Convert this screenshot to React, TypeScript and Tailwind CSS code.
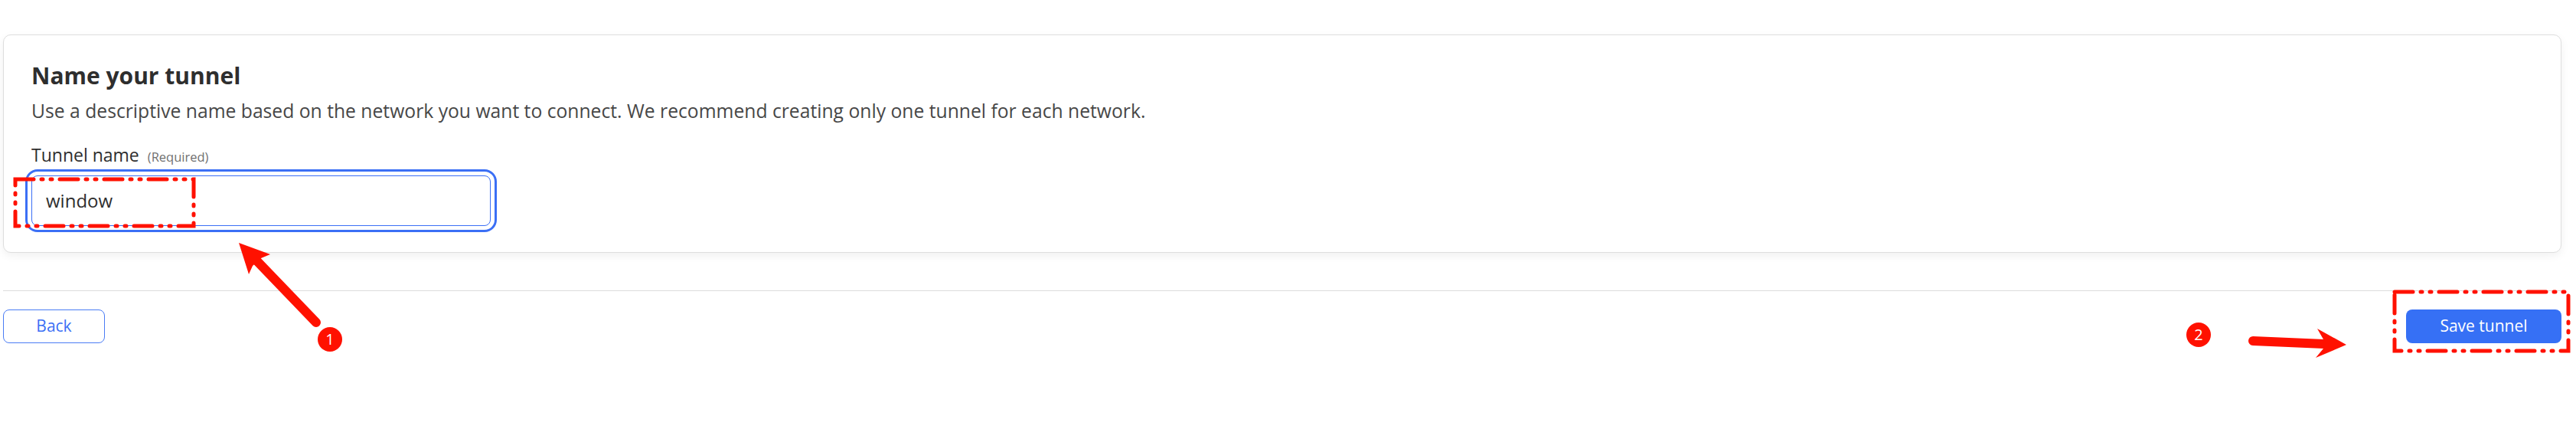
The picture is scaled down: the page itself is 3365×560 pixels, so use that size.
import React from "react";

const RED = "#ff1100";

function Badge({ n, className }: { n: string; className: string }) {
  return (
    <div
      className={`absolute flex h-[32px] w-[32px] items-center justify-center rounded-full bg-[#ff1100] text-[20px] leading-none text-white ${className}`}
    >
      {n}
    </div>
  );
}

// red markup drawn over the screenshot (dash-dot boxes and arrows)
function Annotations() {
  return (
    <svg className="pointer-events-none absolute left-0 top-0" width={3365} height={560}>
      <g fill="none" stroke={RED} strokeWidth={5} strokeLinecap="round" strokeDasharray="24 10 2 10 2 10">
        <rect x={20} y={234} width={233} height={61} />
        <rect x={3128} y={381} width={227} height={77} />
      </g>
      <g stroke={RED} strokeWidth={12} strokeLinecap="round">
        <line x1={413} y1={421} x2={336} y2={341} />
        <line x1={2943} y1={445} x2={3036} y2={449} />
      </g>
      <g fill={RED}>
        <polygon points="312,317 353,332 341,337 330,347 325,358" />
        <polygon points="3065,450 3027,429 3035,443 3035,455 3025,467" />
      </g>
    </svg>
  );
}

export default function App() {
  return (
    <div className="relative h-[560px] w-[3365px] overflow-hidden bg-white font-['Open_Sans',sans-serif]">
      <div className="w-[3346px] pl-[4px] pt-[45px]">
        <div className="rounded-[10px] border border-[#dedede] bg-white px-[36px] pb-[34px] pt-[35px] shadow-[0_4px_12px_rgba(0,0,0,0.06)]">
          <h2 className="text-[30px] font-bold leading-[36px] text-[#2e2e2e]">Name your tunnel</h2>
          <p className="mt-[10px] text-[24.7px] leading-[36px] text-[#474747]">
            Use a descriptive name based on the network you want to connect. We recommend creating only one tunnel for each network.
          </p>
          <div className="mt-[21px] flex items-baseline gap-[11px] leading-[36px]">
            <span className="text-[23px] text-[#2e2e2e]">Tunnel name</span>
            <span className="text-[16.5px] text-[#707070]">(Required)</span>
          </div>
          <div className="mt-[6px] flex h-[66px] w-[600px] items-center rounded-[8px] border border-[#3b6ff5] px-[18px] text-[24px] text-[#2e2e2e] outline-[3px] outline-offset-[5px] outline-[#3b6ff5] outline-solid">
            window
          </div>
        </div>

        <div className="mt-[49px] h-px bg-[#dcdcdc]" />

        <div className="mt-[24px] flex items-center justify-between">
          <button className="h-[44px] w-[133px] rounded-[8px] border border-[#4a7cf5] bg-white text-[21px] text-[#3b6ff5]">
            Back
          </button>
          <button className="h-[44px] w-[203px] rounded-[8px] bg-[#3670f5] text-[21px] text-white">
            Save tunnel
          </button>
        </div>
      </div>

      <Annotations />
      <Badge n="1" className="left-[415px] top-[427px]" />
      <Badge n="2" className="left-[2856px] top-[421px]" />
    </div>
  );
}
